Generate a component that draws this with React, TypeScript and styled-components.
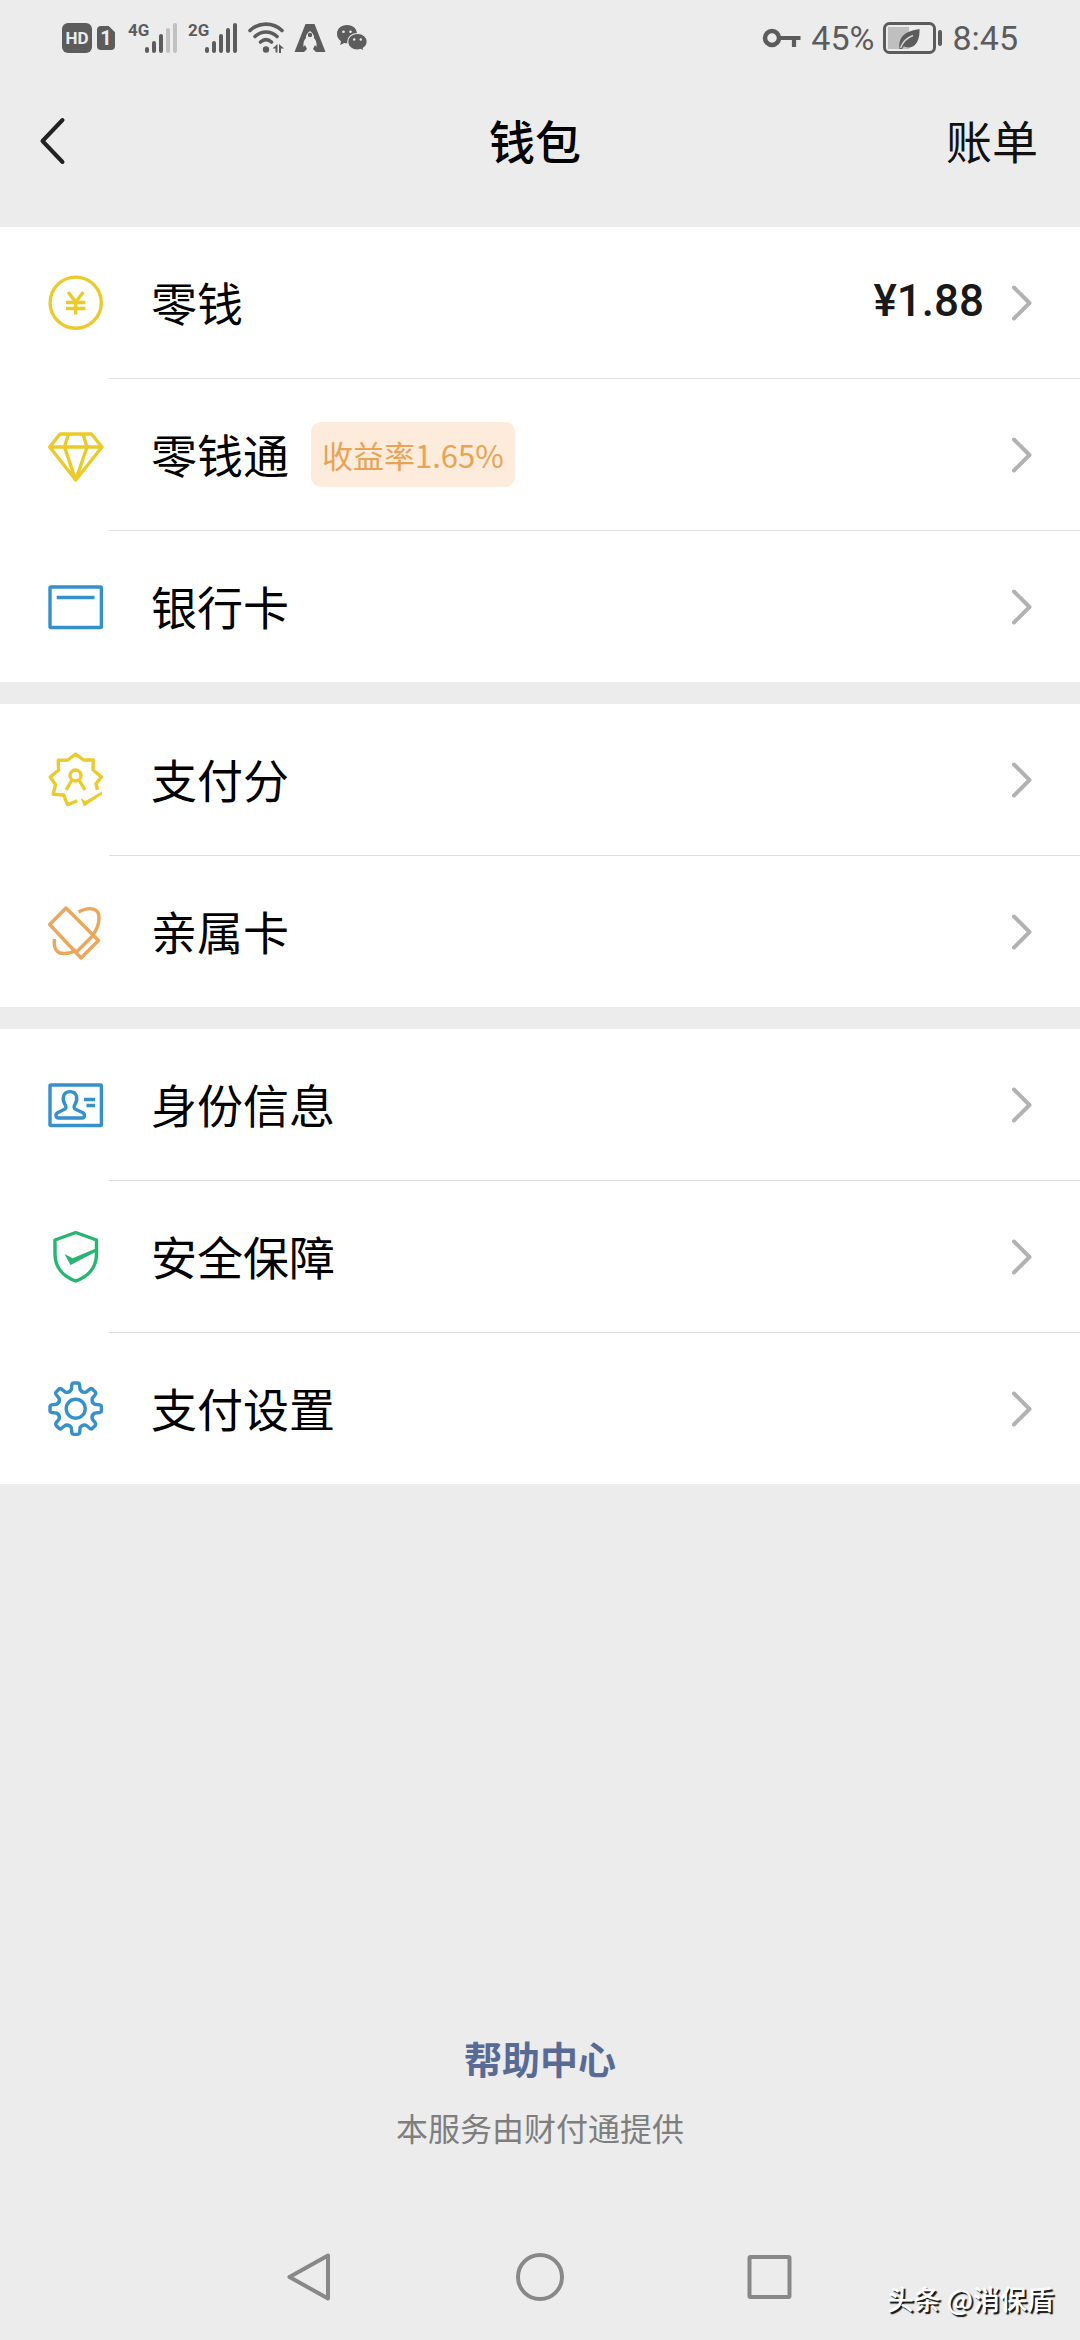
import React from "react";
import styled, { createGlobalStyle } from "styled-components";

const GlobalStyle = createGlobalStyle`
  *, *::before, *::after { box-sizing: border-box; }
  body {
    margin: 0;
    background: #ececec;
    font-family: "Noto Sans CJK SC", "Noto Sans", sans-serif;
    color: #000;
  }
  button { font: inherit; color: inherit; background: none; border: 0; padding: 0; cursor: pointer; }
  a { color: inherit; text-decoration: none; }
  svg { display: block; flex: none; }
`;

const Screen = styled.div`
  position: relative;
  display: flex;
  flex-direction: column;
  min-height: 100vh;
  background: #ececec;
`;

const StatusBar = styled.div`
  display: flex;
  align-items: center;
  justify-content: space-between;
  height: 76px;
  padding: 0 62px;
  color: #5c5c5c;
`;

const StatusGroup = styled.div<{ $gap: number }>`
  display: flex;
  align-items: center;
  gap: ${(p) => p.$gap}px;
`;

const HdBadge = styled.span`
  display: flex;
  align-items: center;
  justify-content: center;
  width: 30px;
  height: 30px;
  margin-right: -5px;
  border-radius: 6px;
  background: #5c5c5c;
  color: #ececec;
  font: 700 17px/30px Roboto, sans-serif;
`;

const SimBadge = styled.span`
  display: flex;
  align-items: center;
  justify-content: center;
  width: 18px;
  height: 24px;
  margin-right: 3px;
  border-radius: 4px;
  background: #5c5c5c;
  clip-path: polygon(0 0, 65% 0, 100% 26%, 100% 100%, 0 100%);
  color: #ececec;
  font: 700 20px/24px Roboto, sans-serif;
`;

const StatusText = styled.span`
  font: 400 34px/40px Roboto, sans-serif;
`;

const Header = styled.header`
  display: flex;
  align-items: center;
  justify-content: space-between;
  height: 151px;
  padding: 0 42px 22px 38px;
  font-size: 46px;
  line-height: 60px;
`;

const BackButton = styled.button`
  display: flex;
  align-items: center;
  width: 86px;
  height: 80px;
`;

const Title = styled.h1`
  margin: 0;
  padding-bottom: 4px;
  font-size: 46px;
  font-weight: 500;
`;

const BillLink = styled.a`
  padding-bottom: 4px;
  color: #111;
`;

const Groups = styled.main`
  display: flex;
  flex-direction: column;
  gap: 22px;
`;

const Group = styled.section`
  background: #fff;
`;

const Row = styled.a`
  position: relative;
  display: flex;
  align-items: center;
  height: 151px;
  padding: 0 48px;

  & + & { margin-top: 1px; }
  & + &::before {
    content: "";
    position: absolute;
    top: -1px;
    left: 109px;
    right: 0;
    height: 1px;
    background: #dedede;
  }
`;

const RowLabel = styled.span`
  margin-left: 47px;
  padding-bottom: 4px;
  font-size: 46px;
  line-height: 60px;
`;

const RateBadge = styled.span`
  margin-left: 22px;
  padding: 0 11px;
  border-radius: 10px;
  background: #fdecdc;
  color: #e8a354;
  font-size: 31px;
  line-height: 65px;
`;

const RowEnd = styled.span`
  display: flex;
  align-items: center;
  gap: 28px;
  margin-left: auto;
`;

const Amount = styled.span`
  padding-bottom: 4px;
  color: #191919;
  font: 500 44px/60px Roboto, sans-serif;
`;

const Footer = styled.footer`
  display: flex;
  flex-direction: column;
  align-items: center;
  gap: 27px;
  margin-top: auto;
  padding: 40px 0 67px;
`;

const HelpLink = styled.a`
  color: #576b95;
  font-size: 38px;
  font-weight: 700;
  line-height: 44px;
`;

const Provider = styled.p`
  margin: 0;
  color: #7e7e7e;
  font-size: 32px;
  line-height: 40px;
`;

const NavBar = styled.nav`
  display: flex;
  align-items: center;
  justify-content: center;
  gap: 182px;
  height: 126px;
`;

const Watermark = styled.div`
  position: absolute;
  right: 26px;
  bottom: 21px;
  color: #fff;
  font-size: 27px;
  font-weight: 500;
  line-height: 40px;
  text-shadow: 2px 2px 1px #111;
`;

const YELLOW = "#ebcb2b";
const BLUE = "#3590cc";
const ORANGE = "#eba75c";
const GREEN = "#27b573";

function LineIcon({ color, children }: { color: string; children: React.ReactNode }) {
  return (
    <svg width="56" height="56" viewBox="0 0 56 56" fill="none" stroke={color} strokeWidth="3.4" strokeLinejoin="round" aria-hidden="true">
      {children}
    </svg>
  );
}

const CoinIcon = () => (
  <LineIcon color={YELLOW}>
    <circle cx="27.7" cy="27.7" r="25.6" />
    <path d="M20 17l7.7 10L35.4 17M18 27.5h19.4M18 33.5h19.4M27.7 27v12.5" />
  </LineIcon>
);

const DiamondIcon = () => (
  <LineIcon color={YELLOW}>
    <path d="M12 7h31.5L54 20 27.7 53 1.7 20zM1.7 20H54M20.5 7l-4 13 11.2 33L39 20 35 7" />
  </LineIcon>
);

const CardIcon = () => (
  <LineIcon color={BLUE}>
    <rect x="2" y="8" width="51.4" height="40.5" rx="1" />
    <path d="M8.7 18.5h37.8" />
  </LineIcon>
);

const ScoreIcon = () => (
  <LineIcon color={YELLOW}>
    <path d="M49.5 38l-1.5-6.5 5.5-6.5-8.5-7 .3-10L35.5 8l-7.8-6-7.8 6-9.7.2.4 9.8-8.4 7 5.3 7.5-2.3 9.8 10.5.7 3.8 9.7 9.8-4" />
    <circle cx="27.5" cy="23.5" r="5.5" />
    <path d="M24 28l-6 10M31 28l6 10" />
    <path d="M32.5 46l5 3L54 39.5v3L36 54.5z" fill={YELLOW} stroke="none" />
  </LineIcon>
);

const FamilyCardIcon = () => (
  <LineIcon color={ORANGE}>
    <path d="M18 4l32.5 32.5L33 54 1.7 20.5zM45.5 31L28 48.5" />
    <path d="M30.5 8C42 2 51 4.5 51 13c0 6-2 12.5-6 18M6.5 35C5 46 10 50 17 49.5c4 0 8-1.5 11.5-3.5" />
  </LineIcon>
);

const IdentityIcon = () => (
  <LineIcon color={BLUE}>
    <rect x="2" y="8" width="51.4" height="40.5" rx="1" />
    <path d="M10.5 41H34c3 0 3.5-4 .5-5.5l-6.5-3c-2.5-1-2.5-3-.8-5.5 1.6-2.6 1.8-5 1.3-7.5-1.4-6.5-11.6-6.5-13 0-.5 2.5-.3 4.9 1.300 7.5 1.700 2.5 1.700 4.500-.8 5.500l-6 3c-3 1.500-2.500 5.500.5 5.500z" />
    <path d="M36 22.5h11M38.5 28.5H47" />
  </LineIcon>
);

const ShieldIcon = () => (
  <LineIcon color={GREEN}>
    <path d="M27.7 3.5L48.5 11v14c0 13-8 22.5-20.8 27C15 47.5 7 38 7 25V11z" />
    <path d="M16.5 25l8 4.3L48 19.5v3.2L22.5 36z" fill={GREEN} stroke="none" />
  </LineIcon>
);

/* Outline of an eight-toothed cog with curved valleys between the teeth. */
const cogPath = (() => {
  const at = (r: number, deg: number) => {
    const a = (deg * Math.PI) / 180;
    return `${(27.7 + r * Math.sin(a)).toFixed(2)} ${(27.7 - r * Math.cos(a)).toFixed(2)}`;
  };
  let d = "";
  for (let k = 0; k < 8; k++) {
    const c = k * 45;
    d += `${k ? "L" : "M"}${at(19.5, c - 13)}L${at(24.5, c - 9)}Q${at(25.8, c - 8)} ${at(25.8, c - 5)}L${at(25.8, c + 5)}Q${at(25.8, c + 8)} ${at(24.5, c + 9)}L${at(19.5, c + 13)}Q${at(16.8, c + 22.5)} ${at(19.5, c + 32)}`;
  }
  return d + "Z";
})();

const SettingsIcon = () => (
  <LineIcon color={BLUE}>
    <path d={cogPath} />
    <circle cx="27.7" cy="27.7" r="9.5" />
  </LineIcon>
);

const Chevron = () => (
  <svg width="20" height="36" viewBox="0 0 20 36" fill="none" stroke="#b2b2b2" strokeWidth="4" strokeLinecap="round" strokeLinejoin="round" aria-hidden="true">
    <path d="M2 2.5L17.5 18 2 33.5" />
  </svg>
);

function Signal({ label, active }: { label: string; active: number }) {
  return (
    <svg width="50" height="48" viewBox="0 0 50 48" fill="currentColor">
      <text x="0" y="22" fontFamily="Roboto, sans-serif" fontSize="17" fontWeight="700">{label}</text>
      {[6, 12, 19, 25, 30].map((h, i) => (
        <rect key={h} x={17 + i * 7} y={39 - h} width="4" height={h} rx="2" opacity={i < active ? 1 : 0.3} />
      ))}
    </svg>
  );
}

const WifiIcon = () => (
  <svg width="36" height="32" viewBox="0 0 36 32" fill="none" stroke="currentColor" strokeWidth="3.6" strokeLinecap="round">
    <path d="M2 8.5C11 0 25 0 34 8.5M7 14.5c6.5-6 15.5-6 22 0M12.5 20c3.5-3 7.5-3 11 0" />
    <circle cx="18" cy="27.5" r="3.2" fill="currentColor" stroke="none" />
    <path d="M29.5 22v8.5h-2v-4h-3zM31 22l5 4.5h-3V31h-2z" fill="currentColor" stroke="none" />
  </svg>
);

const RocketIcon = () => (
  <svg width="32" height="30" viewBox="0 0 32 30" fill="currentColor" fillRule="evenodd">
    <path d="M11.5 1h9L31.5 29H22l-3-3 2-4 1.500 2c.5-4-.5-7-2.500-9 .5-3-1.500-5-4-7-2.500 2-4.500 4-4 7-2 2-3 5-2.500 9l1.500-2 2 4-3 3H.5z" />
    <circle cx="16" cy="12" r="2.2" />
  </svg>
);

const WeChatIcon = () => (
  <svg width="32" height="28" viewBox="0 0 32 28">
    <path d="M11 1C5 1 1 4.8 1 10c0 3 1.5 5.5 4 7.2L4.2 21l4-2c1 .2 1.8.3 2.8.3C17 19.3 21 15.2 21 10S17 1 11 1z" fill="currentColor" />
    <path d="M21.5 9.5c-5.7 0-9.8 3.5-9.8 8.2s4.1 8.3 9.8 8.3c1 0 2.1-.2 3-.5l3.5 1.8-.8-3c2.5-1.5 4-3.9 4-6.600 0-4.700-4-8.200-9.700-8.200z" fill="currentColor" stroke="#ececec" strokeWidth="1.2" />
    <g fill="#ececec">
      <circle cx="7.5" cy="7.8" r="1.3" /><circle cx="14.5" cy="7.8" r="1.3" />
      <circle cx="18.2" cy="15.5" r="1.2" /><circle cx="24.8" cy="15.5" r="1.2" />
    </g>
  </svg>
);

const KeyIcon = () => (
  <svg width="40" height="20" viewBox="0 0 40 20" fill="none" stroke="currentColor">
    <circle cx="10" cy="10" r="7" strokeWidth="4.5" />
    <path d="M18 10h20.5M32 10v9" strokeWidth="4.2" />
  </svg>
);

const BatteryIcon = () => (
  <svg width="60" height="32" viewBox="0 0 60 32">
    <rect x="5" y="5" width="21" height="22" fill="#bfbfbf" />
    <rect x="1.5" y="1.5" width="50" height="29" rx="5" fill="none" stroke="currentColor" strokeWidth="3" />
    <rect x="55" y="8" width="4" height="16" rx="2" fill="currentColor" />
    <path d="M36.5 7c.5 8-2 18.5-11 18.5-2 0-3.5-.6-4.5-1.2L19 27h-2.5C15 14 23 9 36.5 7z" fill="currentColor" />
    <path d="M17.5 26c2-6 6-10 12.5-12.5" fill="none" stroke="#d5d5d5" strokeWidth="1.4" />
  </svg>
);

const NavIcon = ({ children }: { children: React.ReactNode }) => (
  <svg width="48" height="48" viewBox="0 0 48 48" fill="none" stroke="#888" strokeWidth="4" strokeLinejoin="round" aria-hidden="true">
    {children}
  </svg>
);

type Item = { label: string; Icon: () => React.ReactElement; rate?: string; amount?: string };

const GROUPS: Item[][] = [
  [
    { label: "零钱", Icon: CoinIcon, amount: "¥1.88" },
    { label: "零钱通", Icon: DiamondIcon, rate: "收益率1.65%" },
    { label: "银行卡", Icon: CardIcon },
  ],
  [
    { label: "支付分", Icon: ScoreIcon },
    { label: "亲属卡", Icon: FamilyCardIcon },
  ],
  [
    { label: "身份信息", Icon: IdentityIcon },
    { label: "安全保障", Icon: ShieldIcon },
    { label: "支付设置", Icon: SettingsIcon },
  ],
];

export default function App() {
  return (
    <Screen lang="zh-CN">
      <GlobalStyle />
      <StatusBar>
        <StatusGroup $gap={10}>
          <HdBadge>HD</HdBadge>
          <SimBadge>1</SimBadge>
          <Signal label="4G" active={3} />
          <Signal label="2G" active={5} />
          <WifiIcon />
          <RocketIcon />
          <WeChatIcon />
        </StatusGroup>
        <StatusGroup $gap={9}>
          <KeyIcon />
          <StatusText>45%</StatusText>
          <BatteryIcon />
          <StatusText>8:45</StatusText>
        </StatusGroup>
      </StatusBar>

      <Header>
        <BackButton type="button" aria-label="返回">
          <svg width="28" height="48" viewBox="0 0 28 48" fill="none" stroke="#222" strokeWidth="4" strokeLinecap="round" strokeLinejoin="round">
            <path d="M24.5 3L4.5 24l20 21" />
          </svg>
        </BackButton>
        <Title>钱包</Title>
        <BillLink href="#bill">账单</BillLink>
      </Header>

      <Groups>
        {GROUPS.map((items) => (
          <Group key={items[0].label}>
            {items.map(({ label, Icon, rate, amount }) => (
              <Row key={label} href={`#${label}`}>
                <Icon />
                <RowLabel>{label}</RowLabel>
                {rate && <RateBadge>{rate}</RateBadge>}
                <RowEnd>
                  {amount && <Amount>{amount}</Amount>}
                  <Chevron />
                </RowEnd>
              </Row>
            ))}
          </Group>
        ))}
      </Groups>

      <Footer>
        <HelpLink href="#help">帮助中心</HelpLink>
        <Provider>本服务由财付通提供</Provider>
      </Footer>

      <NavBar>
        <button type="button" aria-label="后退">
          <NavIcon><path d="M42 2.5v43L3.5 24z" /></NavIcon>
        </button>
        <button type="button" aria-label="主屏幕">
          <NavIcon><circle cx="24" cy="24" r="22" /></NavIcon>
        </button>
        <button type="button" aria-label="最近任务">
          <NavIcon><rect x="3.5" y="4" width="40" height="40" rx="1" /></NavIcon>
        </button>
      </NavBar>

      <Watermark>头条 @消保盾</Watermark>
    </Screen>
  );
}
